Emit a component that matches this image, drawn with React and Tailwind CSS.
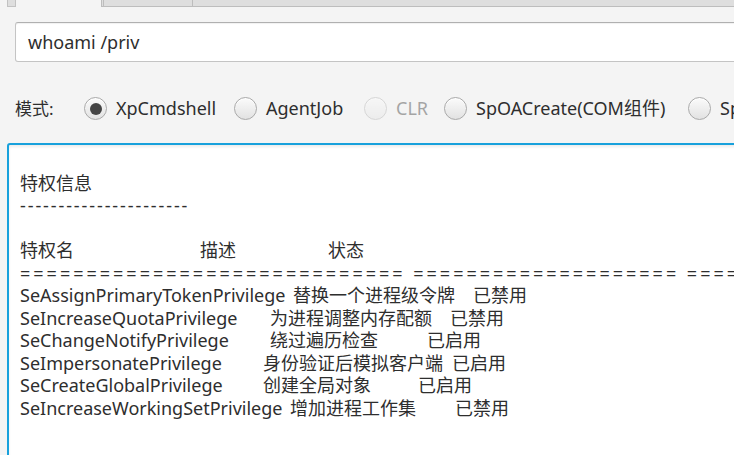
import React from 'react';

const font = { fontFamily: '"Noto Sans", "Noto Sans CJK SC", sans-serif' };

const modes = [
  { label: 'XpCmdshell', width: 'w-[150px]', checked: true },
  { label: 'AgentJob', width: 'w-[130px]' },
  { label: 'CLR', width: 'w-[80px]', disabled: true },
  { label: 'SpOACreate(COM组件)', width: 'w-[244px]' },
  { label: 'SpOAMethod', width: 'w-[160px]' },
];

const privileges = [
  { name: 'SeAssignPrimaryTokenPrivilege', desc: '替换一个进程级令牌', state: '已禁用', nw: 'w-[273px]', dw: 'w-[180px]' },
  { name: 'SeIncreaseQuotaPrivilege', desc: '为进程调整内存配额', state: '已禁用', nw: 'w-[250px]', dw: 'w-[180px]' },
  { name: 'SeChangeNotifyPrivilege', desc: '绕过遍历检查', state: '已启用', nw: 'w-[250px]', dw: 'w-[157px]' },
  { name: 'SeImpersonatePrivilege', desc: '身份验证后模拟客户端', state: '已启用', nw: 'w-[243px]', dw: 'w-[189px]' },
  { name: 'SeCreateGlobalPrivilege', desc: '创建全局对象', state: '已启用', nw: 'w-[243px]', dw: 'w-[155px]' },
  { name: 'SeIncreaseWorkingSetPrivilege', desc: '增加进程工作集', state: '已禁用', nw: 'w-[270px]', dw: 'w-[165px]' },
];

const Radio = ({ label, width, checked, disabled }) => (
  <label className={`flex shrink-0 items-center gap-[9px] ${width} ${disabled ? 'opacity-40' : ''}`}>
    <span className="flex h-[23px] w-[23px] shrink-0 items-center justify-center rounded-full border border-[#a9a9a9] bg-gradient-to-b from-[#fbfbfb] to-[#e2e2e2] shadow-[inset_0_1px_0_#ffffff]">
      {checked && <span className="h-[12px] w-[12px] rounded-full bg-[#444]" />}
    </span>
    <span className="whitespace-nowrap text-[18px] text-[#2e2e2e]">{label}</span>
  </label>
);

const App = () => {
  return (
    <div className="h-[455px] w-[734px] overflow-hidden bg-[#f4f4f4]" style={font}>
      {/* tab strip */}
      <div className="flex h-[7px]">
        <div className="w-[7px]" />
        <div className="w-[9px] border-x border-b border-[#c2c2c2] bg-[#dedede]" />
        <div className="w-[85px]" />
        <div className="w-[91px] border-l-[3px] border-b border-double border-[#bdbdbd] bg-[#dedede]" />
        <div className="flex-1 border-l border-b border-[#bdbdbd] bg-[#dedede]" />
      </div>

      {/* command input */}
      <div className="ml-[15px] mt-[15px] flex h-[40px] w-[760px] items-center rounded-[3px] border border-[#c4c4c4] border-t-[#b0b0b0] bg-white pl-[12px] shadow-[inset_0_1px_1px_rgba(0,0,0,0.06)]">
        <span className="text-[18px] text-[#2e2e2e]">whoami /priv</span>
      </div>

      {/* mode selector */}
      <div className="mt-[35px] flex h-[23px] items-center pl-[15px]">
        <span className="w-[69px] shrink-0 text-[17px] text-[#2e2e2e]">模式:</span>
        {modes.map((m) => (
          <Radio key={m.label} {...m} />
        ))}
      </div>

      {/* output area */}
      <div className="ml-[7px] mt-[23px] h-[400px] w-[760px] overflow-hidden rounded-tl-[3px] border-2 border-[#18a1dc] bg-white pl-[11px] pt-[4px] text-[18px] leading-[22.5px] text-[#2e2e2e] shadow-[inset_0_2px_3px_rgba(0,0,0,0.08)]">
        <div className="h-[22.5px]" />
        <div>特权信息</div>
        <div className="whitespace-pre tracking-[1.9px]">----------------------</div>
        <div className="h-[22.5px]" />
        <div className="flex whitespace-nowrap">
          <span className="w-[180px]">特权名</span>
          <span className="w-[128px]">描述</span>
          <span>状态</span>
        </div>
        <div className="whitespace-pre tracking-[3px]">============================= ==================== ======</div>
        {privileges.map((p) => (
          <div key={p.name} className="flex whitespace-nowrap">
            <span className={`${p.nw} shrink-0`}>{p.name}</span>
            <span className={`${p.dw} shrink-0`}>{p.desc}</span>
            <span>{p.state}</span>
          </div>
        ))}
      </div>
    </div>
  );
};

export default App;
